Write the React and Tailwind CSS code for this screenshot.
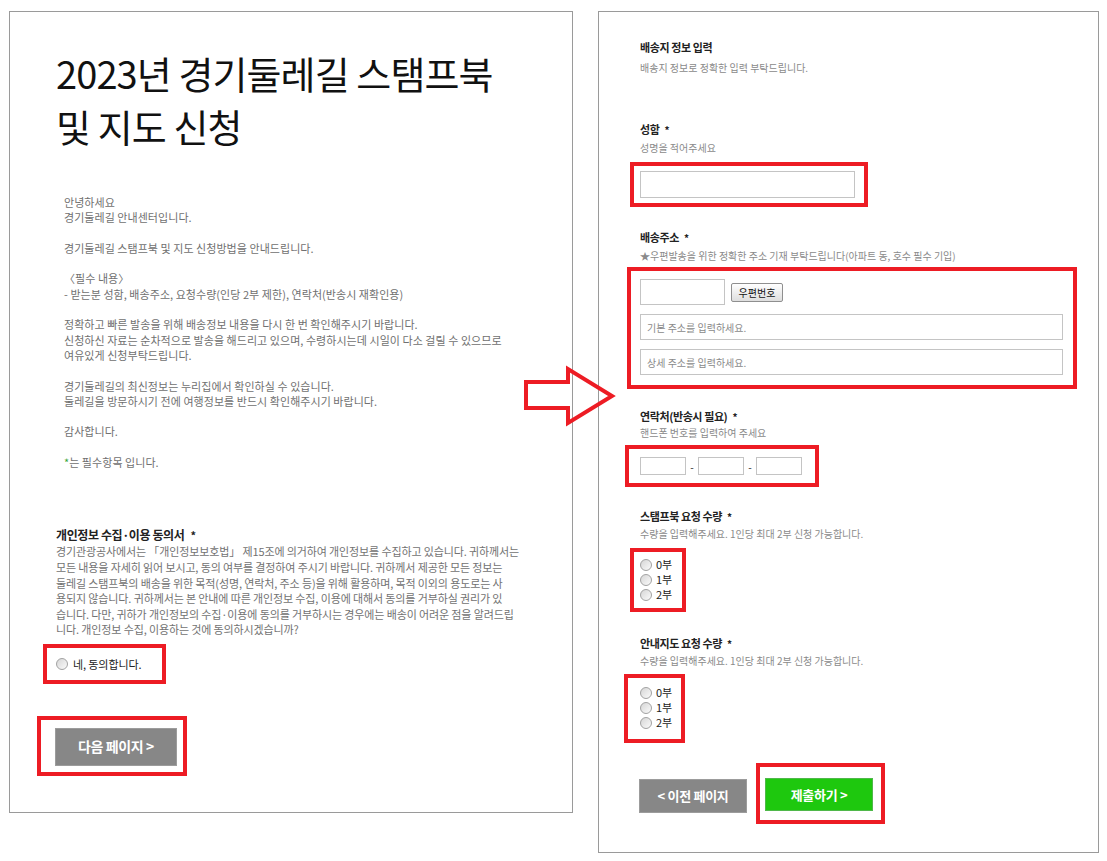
import React from "react";

const RED = "border-[#ed1c24]";

function Radio() {
  return (
    <span className="inline-block w-[12px] h-[12px] rounded-full border border-[#a2a2a2] bg-linear-to-br from-[#d6d6d6] to-[#fbfbfb] shrink-0" />
  );
}

function RadioRow({ label }) {
  return (
    <div className="flex items-center h-[15px] gap-[4px]">
      <Radio />
      <span className="text-[11px] text-[#222] tracking-[-0.2px]">{label}</span>
    </div>
  );
}

const intro = [
  "안녕하세요",
  "경기둘레길 안내센터입니다.",
  "",
  "경기둘레길 스탬프북 및 지도 신청방법을 안내드립니다.",
  "",
  "〈필수 내용〉",
  "- 받는분 성함, 배송주소, 요청수량(인당 2부 제한), 연락처(반송시 재확인용)",
  "",
  "정확하고 빠른 발송을 위해 배송정보 내용을 다시 한 번 확인해주시기 바랍니다.",
  "신청하신 자료는 순차적으로 발송을 해드리고 있으며, 수령하시는데 시일이 다소 걸릴 수 있으므로",
  "여유있게 신청부탁드립니다.",
  "",
  "경기둘레길의 최신정보는 누리집에서 확인하실 수 있습니다.",
  "둘레길을 방문하시기 전에 여행정보를 반드시 확인해주시기 바랍니다.",
  "",
  "감사합니다.",
  "",
];

const consent = [
  "경기관광공사에서는 「개인정보보호법」 제15조에 의거하여 개인정보를 수집하고 있습니다. 귀하께서는",
  "모든 내용을 자세히 읽어 보시고, 동의 여부를 결정하여 주시기 바랍니다. 귀하께서 제공한 모든 정보는",
  "둘레길 스탬프북의 배송을 위한 목적(성명, 연락처, 주소 등)을 위해 활용하며, 목적 이외의 용도로는 사",
  "용되지 않습니다. 귀하께서는 본 안내에 따른 개인정보 수집, 이용에 대해서 동의를 거부하실 권리가 있",
  "습니다. 다만, 귀하가 개인정보의 수집·이용에 동의를 거부하시는 경우에는 배송이 어려운 점을 알려드립",
  "니다. 개인정보 수집, 이용하는 것에 동의하시겠습니까?",
];

function Label({ children, className = "" }) {
  return (
    <div className={"h-[16px] leading-[16px] text-[11px] font-bold text-[#222] tracking-[-0.4px] " + className}>
      {children}
      <span className="ml-[5px] text-[10px]">*</span>
    </div>
  );
}

function Desc({ children, className = "" }) {
  return (
    <div className={"h-[16px] leading-[16px] text-[10px] text-[#8a8a8a] tracking-[0px] whitespace-nowrap " + className}>
      {children}
    </div>
  );
}

export default function App() {
  return (
    <div className="relative w-[1107px] h-[861px] bg-white font-['Noto_Sans_CJK_KR','Noto_Sans',sans-serif]">
      <div className="flex items-start gap-[25px] pl-[9px] pt-[11px]">
        {/* LEFT PANEL */}
        <div className="w-[564px] h-[802px] border border-[#9a9a9a] pl-[46px] pt-[34px]">
          <h1 className="text-[38px] leading-[53px] tracking-[-0.9px] text-[#111] font-normal">
            2023년 경기둘레길 스탬프북
            <br />
            및 지도 신청
          </h1>
          <div className="mt-[43px] ml-[8px] text-[11px] leading-[15.3px] text-[#707070] tracking-[0.05px] whitespace-nowrap">
            {intro.map((l, i) => (
              <div key={i} className="h-[15.3px]">{l}</div>
            ))}
            <div className="h-[15.3px]">
              <span className="text-[#3aa53a]">*</span>는 필수항목 입니다.
            </div>
          </div>
          <div className="mt-[57px] h-[16px] leading-[16px] text-[12px] font-bold text-[#222] tracking-[-0.4px]">
            개인정보 수집·이용 동의서<span className="ml-[6px] text-[11px]">*</span>
          </div>
          <div className="mt-[1px] text-[11px] leading-[15.6px] text-[#727272] tracking-[-0.12px] whitespace-nowrap">
            {consent.map((l, i) => (
              <div key={i} className="h-[15.6px]">{l}</div>
            ))}
          </div>
          <div className={"mt-[6px] -ml-[13px] w-[123px] h-[40px] border-4 " + RED + " pl-[9px] flex items-center gap-[5px]"}>
            <Radio />
            <span className="text-[11px] text-[#222] tracking-[-0.1px]">네, 동의합니다.</span>
          </div>
          <div className={"mt-[32px] -ml-[19px] w-[150px] h-[60px] border-4 " + RED + " pl-[14px] pt-[8px]"}>
            <div className="w-[122px] h-[38px] bg-[#878787] border border-[#9c9c9c] flex items-center justify-center text-white text-[14px] font-bold tracking-[-0.4px]">
              다음 페이지 &gt;
            </div>
          </div>
        </div>

        {/* RIGHT PANEL */}
        <div className="w-[501px] h-[842px] border border-[#9a9a9a] pl-[41px] pt-[27px]">
          <div className="h-[16px] leading-[16px] text-[11px] font-bold text-[#222] tracking-[-0.4px]">배송지 정보 입력</div>
          <Desc className="mt-[5px]">배송지 정보로 정확한 입력 부탁드립니다.</Desc>

          <Label className="mt-[45px]">성함</Label>
          <Desc className="mt-[3px]">성명을 적어주세요</Desc>
          <div className={"mt-[6px] -ml-[10px] w-[238px] border-4 " + RED + " pl-[6px] py-[5px]"}>
            <div className="w-[215px] h-[27px] border border-[#c4c4c4]" />
          </div>

          <Label className="mt-[22px]">배송주소</Label>
          <Desc className="mt-[3px]">★우편발송을 위한 정확한 주소 기재 부탁드립니다(아파트 동, 호수 필수 기입)</Desc>
          <div className={"mt-[3px] -ml-[13px] w-[450px] border-4 " + RED + " pl-[9px] pt-[8px] pb-[10px]"}>
            <div className="flex items-center gap-[6px]">
              <div className="w-[85px] h-[26px] border border-[#c4c4c4]" />
              <div className="w-[52px] h-[19px] rounded-[2px] border border-[#8f8f8f] bg-linear-to-b from-white to-[#dedede] flex items-center justify-center text-[10px] text-[#111] tracking-[0px]">
                우편번호
              </div>
            </div>
            <div className="mt-[9px] w-[423px] h-[26px] border border-[#c4c4c4] pl-[6px] flex items-center text-[10px] text-[#8a8a8a] tracking-[0px]">
              기본 주소를 입력하세요.
            </div>
            <div className="mt-[9px] w-[423px] h-[26px] border border-[#c4c4c4] pl-[6px] flex items-center text-[10px] text-[#8a8a8a] tracking-[0px]">
              상세 주소를 입력하세요.
            </div>
          </div>

          <Label className="mt-[19px]">연락처(반송시 필요)</Label>
          <Desc className="mt-[1px]">핸드폰 번호를 입력하여 주세요</Desc>
          <div className={"mt-[4px] -ml-[15px] w-[194px] border-4 " + RED + " pl-[11px] py-[8px] flex items-center"}>
            <div className="w-[46px] h-[18px] border border-[#c4c4c4]" />
            <span className="w-[12px] text-center text-[10px] text-[#222]">-</span>
            <div className="w-[46px] h-[18px] border border-[#c4c4c4]" />
            <span className="w-[12px] text-center text-[10px] text-[#222]">-</span>
            <div className="w-[46px] h-[18px] border border-[#c4c4c4]" />
          </div>

          <Label className="mt-[21px]">스탬프북 요청 수량</Label>
          <Desc className="mt-[2px]">수량을 입력해주세요. 1인당 최대 2부 신청 가능합니다.</Desc>
          <div className={"mt-[6px] -ml-[10px] w-[56px] border-4 " + RED + " pl-[6px] pt-[5px] pb-[6px]"}>
            <RadioRow label="0부" />
            <RadioRow label="1부" />
            <RadioRow label="2부" />
          </div>

          <Label className="mt-[23px]">안내지도 요청 수량</Label>
          <Desc className="mt-[2px]">수량을 입력해주세요. 1인당 최대 2부 신청 가능합니다.</Desc>
          <div className={"mt-[5px] -ml-[16px] w-[61px] border-4 " + RED + " pl-[12px] pt-[7px] pb-[9px]"}>
            <RadioRow label="0부" />
            <RadioRow label="1부" />
            <RadioRow label="2부" />
          </div>

          <div className="flex items-start">
            <div className="mt-[36px] -ml-[1px] w-[108px] h-[34px] bg-[#878787] border border-[#9c9c9c] flex items-center justify-center text-white text-[13px] font-bold tracking-[-0.3px]">
              &lt; 이전 페이지
            </div>
            <div className={"mt-[20px] ml-[9px] w-[129px] h-[61px] border-4 " + RED + " pl-[5px] pt-[11px]"}>
              <div className="w-[108px] h-[33px] bg-[#1ec80e] border border-[#4fb84a] flex items-center justify-center text-white text-[13px] font-bold tracking-[-0.3px]">
                제출하기 &gt;
              </div>
            </div>
          </div>
        </div>
      </div>

      {/* Annotation arrow */}
      <svg className="absolute left-[520px] top-[362px]" width="100" height="70" viewBox="520 362 100 70">
        <polygon
          points="526,382 568,382 568,369 612,396 568,423 568,408 526,408"
          fill="none"
          stroke="#ed1c24"
          strokeWidth="4"
          strokeLinejoin="miter"
        />
      </svg>
    </div>
  );
}
